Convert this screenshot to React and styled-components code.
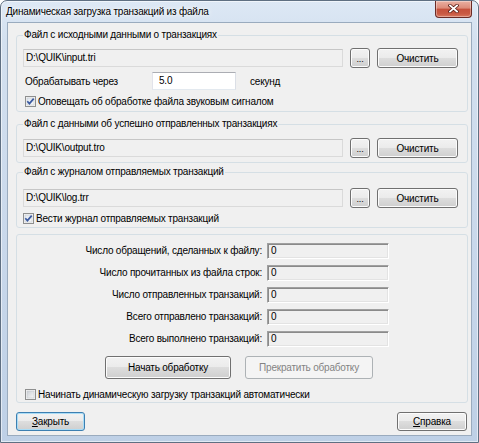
import React, {useId} from "react";
import styled, {createGlobalStyle} from "styled-components";

const GlobalStyle = createGlobalStyle`
    html, body {
        margin: 0;
        padding: 0;
        background: #fff;
    }
    body {
        font-family: "Liberation Sans", Arial, sans-serif;
        font-size: 10px;
        letter-spacing: -0.2px;
        color: #000;
    }
    * {
        box-sizing: border-box;
    }
`;

// окно с рамкой в стиле Windows 7
const Window = styled.div`
    width: 479px;
    height: 443px;
    border: 1px solid #5f6f82;
    border-radius: 7px 7px 0 0;
    background: linear-gradient(180deg, #dde8f5 0%, #d3e0ef 40px, #c9d8eb 55%, #bed0e6 100%);
    box-shadow: inset 0 0 0 1px rgba(255, 255, 255, 0.55);
    display: flex;
    flex-direction: column;
    overflow: hidden;
`;

const TitleBar = styled.div`
    height: 21px;
    flex-shrink: 0;
    display: flex;
    align-items: flex-start;
    justify-content: space-between;
    padding: 0 6px 0 5px;
`;

const Title = styled.span`
    line-height: 22px;
    text-shadow: 0 0 6px #fff, 0 0 3px #fff;
`;

const CloseButton = styled.div`
    width: 37px;
    height: 17px;
    border: 1px solid #6b2b25;
    border-top: none;
    border-radius: 0 0 4px 4px;
    background: linear-gradient(180deg, #eab0a2 0%, #dc8a78 45%, #c5503b 50%, #c95a43 80%, #d9785f 100%);
    box-shadow: inset 0 0 0 1px rgba(255, 255, 255, 0.35);
    display: flex;
    align-items: flex-start;
    justify-content: center;
    padding-top: 3px;
`;

const Client = styled.div`
    flex: 1;
    margin: 0 6px 6px;
    background: #f0f0f0;
    border: 1px solid #9aabbe;
    padding: 5px 3px 0 8px;
    display: flex;
    flex-direction: column;
`;

const Group = styled.fieldset`
    margin: ${(props) => props.$mt || 0}px 0 0;
    padding: ${(props) => props.$pad};
    border: 1px solid #d5dfe5;
    border-radius: 3px;
    min-width: 0;
    display: flex;
    flex-direction: column;
    gap: ${(props) => props.$gap || 0}px;
`;

const Legend = styled.legend`
    padding: 0 1px;
    line-height: 14px;
`;

const Row = styled.div`
    height: ${(props) => props.$h}px;
    display: flex;
    align-items: center;
    gap: ${(props) => props.$gap || 0}px;
`;

const PathField = styled.div`
    width: 320px;
    height: 18px;
    border: 1px solid #dadada;
    border-top-color: #c6c6c6;
    background: #f0f0f0;
    padding: 0 2px;
    line-height: 16px;
    white-space: nowrap;
`;

const Edit = styled.div`
    width: 84px;
    height: 18px;
    border: 1px solid;
    border-color: #abadb3 #dbdfe6 #e3e9ef #e2e3ea;
    background: #fff;
    padding: 0 6px;
    line-height: 16px;
`;

const Label = styled.span`
    width: ${(props) => props.$w}px;
    margin-left: 2px;
    white-space: nowrap;
`;

const Unit = styled.span`
    margin-left: 14px;
`;

const Button = styled.button`
    width: ${(props) => props.$w}px;
    height: ${(props) => props.$h || 20}px;
    padding: 0;
    font: inherit;
    letter-spacing: inherit;
    color: #000;
    border: 1px solid ${(props) => (props.$default ? "#3c7fb1" : "#707070")};
    border-radius: 3px;
    background: linear-gradient(180deg, #f2f2f2 0%, #ebebeb 49%, #dddddd 50%, #cfcfcf 100%);
    box-shadow: inset 0 0 0 1px ${(props) => (props.$default ? "#a9dcf6" : "#fcfcfc")};
    flex-shrink: 0;

    &:disabled {
        border-color: #adb2b5;
        background: #f4f4f4;
        color: #838383;
        box-shadow: none;
    }
`;

const Dots = styled.span`
    display: block;
    line-height: 1;
    padding-top: 3px;
    font-size: 9px;
`;

const Key = styled.span`
    text-decoration: underline;
`;

const CheckLine = styled.label`
    height: 14px;
    display: flex;
    align-items: center;
    gap: 2px;
    padding-left: ${(props) => props.$indent || 0}px;
    white-space: nowrap;
`;

const StatsGrid = styled.div`
    display: grid;
    grid-template-columns: 245px 122px;
    grid-auto-rows: 16px;
    column-gap: 5px;
    row-gap: 6px;
    margin-bottom: 1px;
`;

const StatLabel = styled.span`
    text-align: right;
    line-height: 16px;
    white-space: nowrap;
`;

const StatField = styled.div`
    height: 16px;
    border: 1px solid;
    border-color: #a0a0a0 #ffffff #ffffff #a0a0a0;
    box-shadow: inset 1px 1px 0 #8a8a8a, inset -1px -1px 0 #e3e3e3;
    background: #f0f0f0;
    padding-left: 3px;
    line-height: 14px;
`;

const ActionRow = styled.div`
    display: flex;
    gap: 14px;
    padding-left: 88px;
`;

const Footer = styled.div`
    display: flex;
    justify-content: space-between;
    margin-top: 9px;
    padding-right: 1px;
`;

const CloseGlyph = () => (
    <svg width="11" height="9" viewBox="0 0 11 9">
        <path d="M2 1.5 L9 7.5 M9 1.5 L2 7.5" stroke="#5a1d16" strokeWidth="3.4" strokeLinecap="square" fill="none"/>
        <path d="M2 1.5 L9 7.5 M9 1.5 L2 7.5" stroke="#ffffff" strokeWidth="1.8" strokeLinecap="square" fill="none"/>
    </svg>
);

const CheckBox = ({checked}) => {
    const id = useId();
    return (
        <svg width="11" height="11" viewBox="0 0 11 11" style={{flexShrink: 0}}>
            <defs>
                <linearGradient id={id} x1="0" y1="0" x2="1" y2="1">
                    <stop offset="0" stopColor={checked ? "#dfe6f0" : "#cbcfd5"}/>
                    <stop offset="1" stopColor="#f8f8f8"/>
                </linearGradient>
            </defs>
            <rect x="0.5" y="0.5" width="10" height="10" fill="#f6f6f6" stroke="#8e8f8f"/>
            <rect x="2" y="2" width="7" height="7" fill={`url(#${id})`} stroke="#c4c8ce" strokeWidth="0.6"/>
            {checked && (
                <path d="M2.3 5.3 L4.4 7.6 L8.7 2.6" stroke="#3b5aa0" strokeWidth="1.7" fill="none"/>
            )}
        </svg>
    );
};

const CheckRow = ({checked, indent, children}) => (
    <CheckLine $indent={indent}>
        <CheckBox checked={checked}/>
        <span>{children}</span>
    </CheckLine>
);

const FileRow = ({path}) => (
    <Row $h={20} $gap={7}>
        <PathField>{path}</PathField>
        <Button $w={20}><Dots>...</Dots></Button>
        <Button $w={81}>Очистить</Button>
    </Row>
);

const stats = [
    "Число обращений, сделанных к файлу:",
    "Число прочитанных из файла строк:",
    "Число отправленных транзакций:",
    "Всего отправлено транзакций:",
    "Всего выполнено транзакций:",
];

const App = () => {
    return (
        <>
            <GlobalStyle/>
            <Window>
                <TitleBar>
                    <Title>Динамическая загрузка транзакций из файла</Title>
                    <CloseButton><CloseGlyph/></CloseButton>
                </TitleBar>
                <Client>
                    <Group $pad="6px 8px 3px 6px" $gap={4}>
                        <Legend>Файл с исходными данными о транзакциях</Legend>
                        <FileRow path={"D:\\QUIK\\input.tri"}/>
                        <Row $h={18}>
                            <Label $w={127}>Обрабатывать через</Label>
                            <Edit>5.0</Edit>
                            <Unit>секунд</Unit>
                        </Row>
                        <CheckRow checked indent={2}>Оповещать об обработке файла звуковым сигналом</CheckRow>
                    </Group>

                    <Group $mt={5} $pad="7px 8px 4px 6px">
                        <Legend>Файл с данными об успешно отправленных транзакциях</Legend>
                        <FileRow path={"D:\\QUIK\\output.tro"}/>
                    </Group>

                    <Group $mt={2} $pad="9px 8px 2px 6px" $gap={3}>
                        <Legend>Файл с журналом отправляемых транзакций</Legend>
                        <FileRow path={"D:\\QUIK\\log.trr"}/>
                        <CheckRow checked indent={0}>Вести журнал отправляемых транзакций</CheckRow>
                    </Group>

                    <Group $mt={6} $pad="8px 0 1px 0" $gap={8}>
                        <StatsGrid>
                            {stats.map((el) => (
                                <React.Fragment key={el}>
                                    <StatLabel>{el}</StatLabel>
                                    <StatField>0</StatField>
                                </React.Fragment>
                            ))}
                        </StatsGrid>
                        <ActionRow>
                            <Button $w={126} $h={23}>Начать обработку</Button>
                            <Button $w={128} $h={23} disabled>Прекратить обработку</Button>
                        </ActionRow>
                        <CheckRow indent={8}>Начинать динамическую загрузку транзакций автоматически</CheckRow>
                    </Group>

                    <Footer>
                        <Button $w={69} $h={19} $default><Key>З</Key>акрыть</Button>
                        <Button $w={70} $h={19}><Key>С</Key>правка</Button>
                    </Footer>
                </Client>
            </Window>
        </>
    );
};

export default App;
